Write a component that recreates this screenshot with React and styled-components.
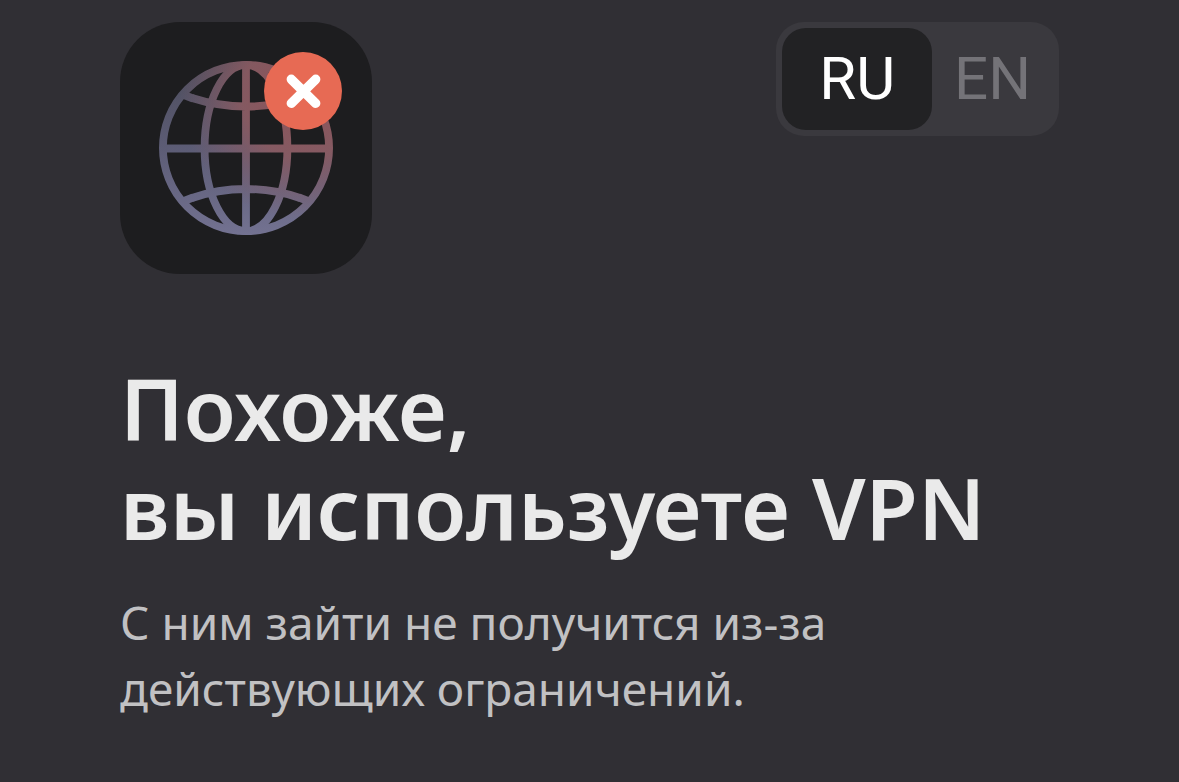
import React, { useState } from "react";
import styled, { createGlobalStyle } from "styled-components";

const GlobalStyle = createGlobalStyle`
  *, *::before, *::after { box-sizing: border-box; }
  body {
    margin: 0;
    background: #302f34;
    font-family: "Noto Sans", "Open Sans", sans-serif;
  }
`;

const Page = styled.main`
  padding: 22px 120px 40px;
`;

const Header = styled.header`
  display: flex;
  justify-content: space-between;
  align-items: flex-start;
  margin-bottom: 85px;
`;

const Tile = styled.svg`
  display: block;
  flex: none;
  width: 252px;
  height: 252px;
  border-radius: 60px;
  background: #1d1d1f;
`;

const Switcher = styled.div`
  display: flex;
  padding: 6px;
  border-radius: 28px;
  background: #3a393e;
`;

const LangButton = styled.button`
  height: 102px;
  padding: 0 ${(p) => (p.$active ? 37 : 22)}px;
  border: 0;
  border-radius: 24px;
  background: ${(p) => (p.$active ? "#222224" : "transparent")};
  color: ${(p) => (p.$active ? "#ffffff" : "#747378")};
  font-family: Roboto, sans-serif;
  font-size: 60px;
  font-weight: 400;
  line-height: 102px;
  cursor: pointer;
`;

const Title = styled.h1`
  margin: 0 0 32px;
  color: #eaeaea;
  font-size: 85px;
  font-weight: 600;
  line-height: 99px;
`;

const Text = styled.p`
  margin: 0;
  color: #c1c1c3;
  font-size: 46px;
  line-height: 66px;
`;

function GlobeTile() {
  return (
    <Tile viewBox="0 0 252 252" aria-hidden="true">
      <defs>
        <linearGradient id="base" gradientUnits="userSpaceOnUse" x1="126" y1="39" x2="126" y2="213">
          <stop offset="0" stopColor="#4d4d5c" />
          <stop offset="0.5" stopColor="#5c5c75" />
          <stop offset="1" stopColor="#737291" />
        </linearGradient>
        <radialGradient id="warm" gradientUnits="userSpaceOnUse" cx="184" cy="74" r="124">
          <stop offset="0" stopColor="#8c5257" />
          <stop offset="0.5" stopColor="#8b5a60" stopOpacity="0.88" />
          <stop offset="1" stopColor="#855c68" stopOpacity="0" />
        </radialGradient>
        <g id="globe" fill="none" strokeWidth="7.8">
          <circle cx="126" cy="126" r="83.1" />
          <ellipse cx="126" cy="126" rx="41.4" ry="83.1" />
          <path d="M126 42V210M42 126.5H210M72 76C89 81.500 106 84.5 126 84.5S163 81.500 180 76M72 176C89 170 106 167 126 167S163 170 180 176" />
          <path d="M64 73L73 76.500M188 73L179 76.500M64 179L73 175.500M188 179L179 175.500" />
        </g>
        <mask id="globeMask" maskUnits="userSpaceOnUse" x="0" y="0" width="252" height="252">
          <use href="#globe" stroke="#fff" />
        </mask>
      </defs>
      <g mask="url(#globeMask)">
        <rect width="252" height="252" fill="url(#base)" />
        <rect width="252" height="252" fill="url(#warm)" />
      </g>
      <circle cx="183" cy="69" r="39" fill="#e76a54" />
      <path d="M171.300 57.300L195.700 81.300M195.700 57.300L171.300 81.300" stroke="#fff" strokeWidth="9.4" strokeLinecap="round" />
    </Tile>
  );
}

const languages = ["RU", "EN"];

export default function App() {
  const [lang, setLang] = useState("RU");
  return (
    <>
      <GlobalStyle />
      <Page>
        <Header>
          <GlobeTile />
          <Switcher>
            {languages.map((l) => (
              <LangButton
                key={l}
                type="button"
                $active={l === lang}
                aria-pressed={l === lang}
                onClick={() => setLang(l)}
              >
                {l}
              </LangButton>
            ))}
          </Switcher>
        </Header>
        <Title>
          Похоже,
          <br />
          вы используете VPN
        </Title>
        <Text>
          С ним зайти не получится из-за
          <br />
          действующих ограничений.
        </Text>
      </Page>
    </>
  );
}
